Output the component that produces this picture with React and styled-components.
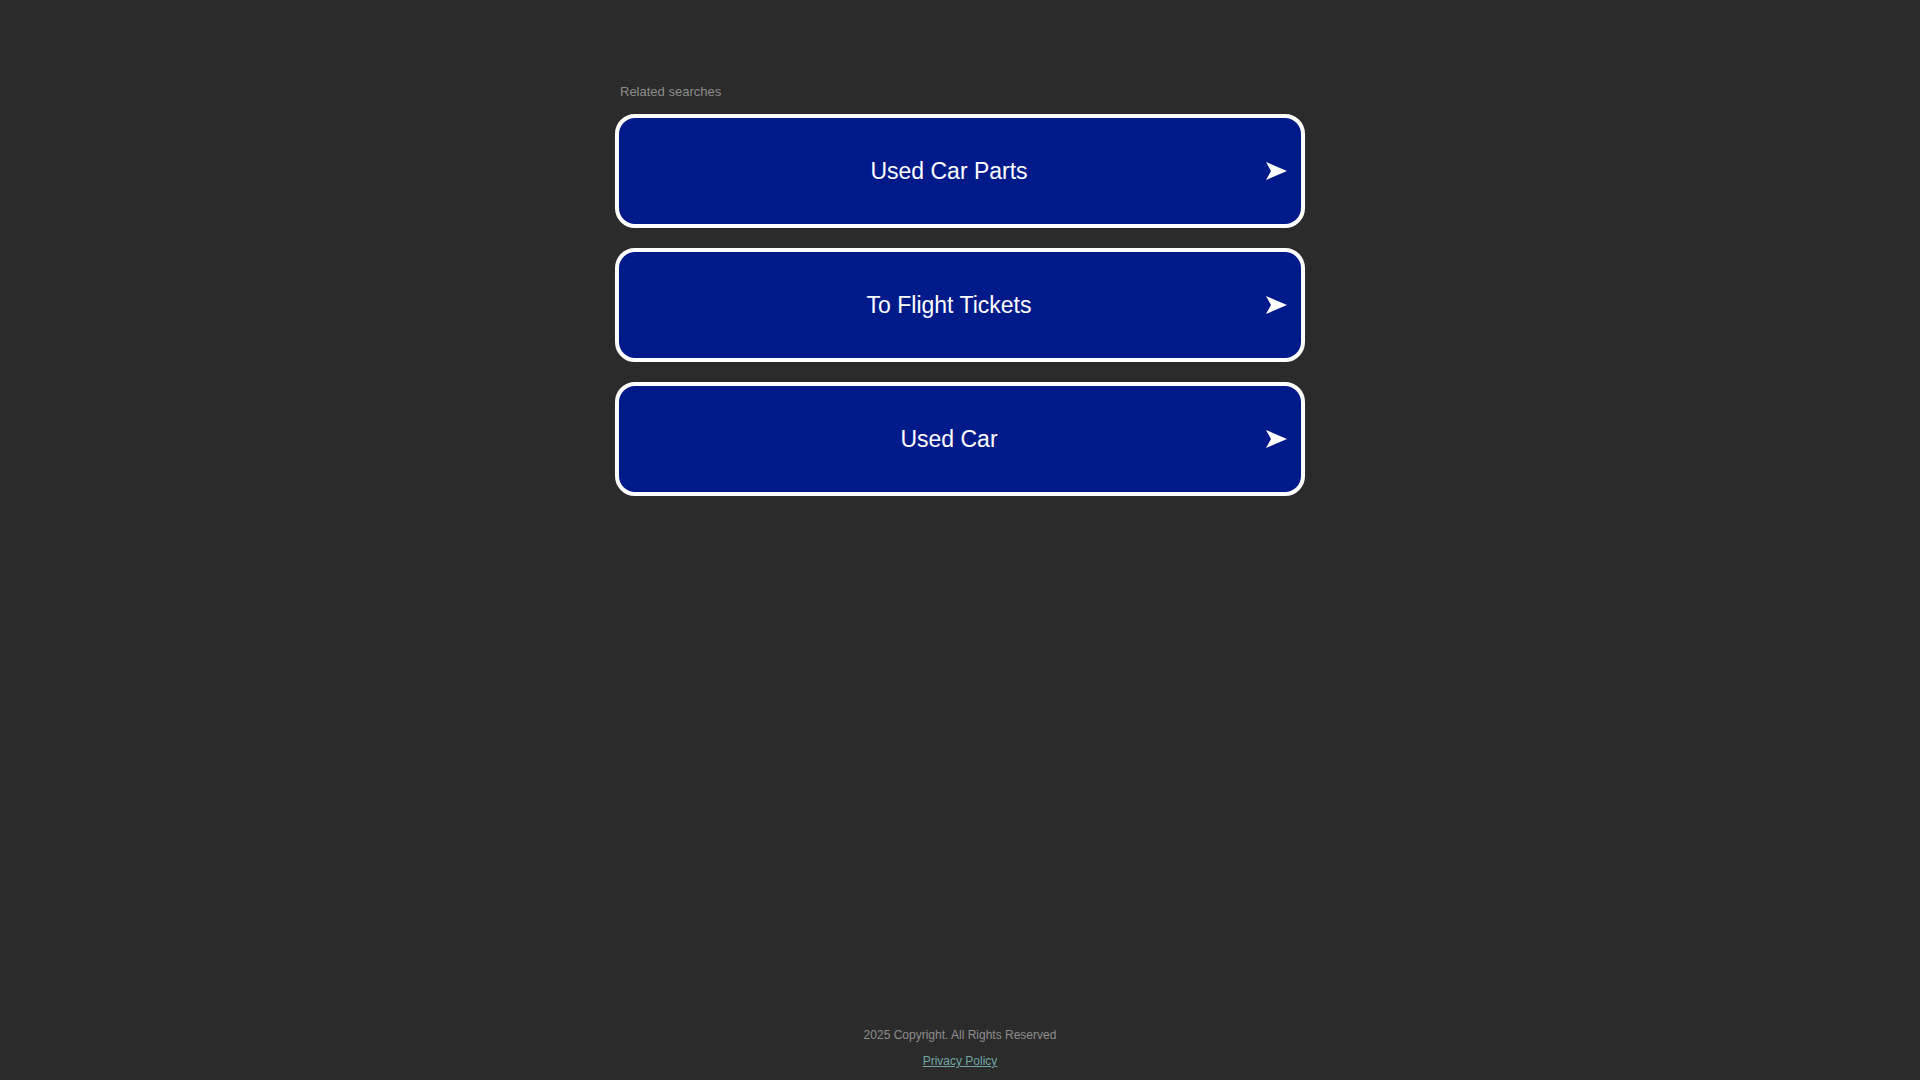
import React from 'react';
import styled, { createGlobalStyle } from 'styled-components';

const GlobalStyle = createGlobalStyle`
	html, body {
		margin: 0;
		padding: 0;
		background: #2b2b2b;
		font-family: 'Liberation Sans', Arial, sans-serif;
	}
`;

const Page = styled.div`
	min-height: 100vh;
	display: flex;
	flex-direction: column;
	align-items: center;
	box-sizing: border-box;
`;

const Content = styled.main`
	width: 690px;
	padding-top: 84px;
	flex: 1;
`;

const Caption = styled.div`
	font-size: 13px;
	line-height: 16px;
	color: #8d8d8d;
	padding-left: 5px;
	margin-bottom: 14px;
`;

const List = styled.div`
	display: flex;
	flex-direction: column;
	gap: 20px;
`;

const Link = styled.a`
	position: relative;
	display: flex;
	align-items: center;
	justify-content: center;
	height: 106px;
	box-sizing: content-box;
	border: 4px solid #ffffff;
	border-radius: 20px;
	background: #011a8a;
	color: #ffffff;
	font-size: 23px;
	text-decoration: none;
	padding-right: 22px;
`;

const Arrow = styled.svg`
	position: absolute;
	right: 14px;
	top: 50%;
	transform: translateY(-50%);
`;

const Footer = styled.footer`
	display: flex;
	flex-direction: column;
	align-items: center;
	gap: 10px;
	padding-bottom: 11px;
	font-size: 12px;
	line-height: 16px;
	color: #8d8d8d;
`;

const Policy = styled.a`
	color: #72a4a4;
	text-decoration: underline;
`;

const searches = ['Used Car Parts', 'To Flight Tickets', 'Used Car'];

const App = () => (
	<>
		<GlobalStyle />
		<Page>
			<Content>
				<Caption>Related searches</Caption>
				<List>
					{searches.map(s => (
						<Link href="#" key={s}>
							{s}
							<Arrow width="21" height="18" viewBox="0 0 21 18">
								<path d="M0 0 L21 9 L0 18 L5 9 Z" fill="#ffffff" />
							</Arrow>
						</Link>
					))}
				</List>
			</Content>
			<Footer>
				<div>2025 Copyright. All Rights Reserved</div>
				<Policy href="#">Privacy Policy</Policy>
			</Footer>
		</Page>
	</>
);

export default App;
